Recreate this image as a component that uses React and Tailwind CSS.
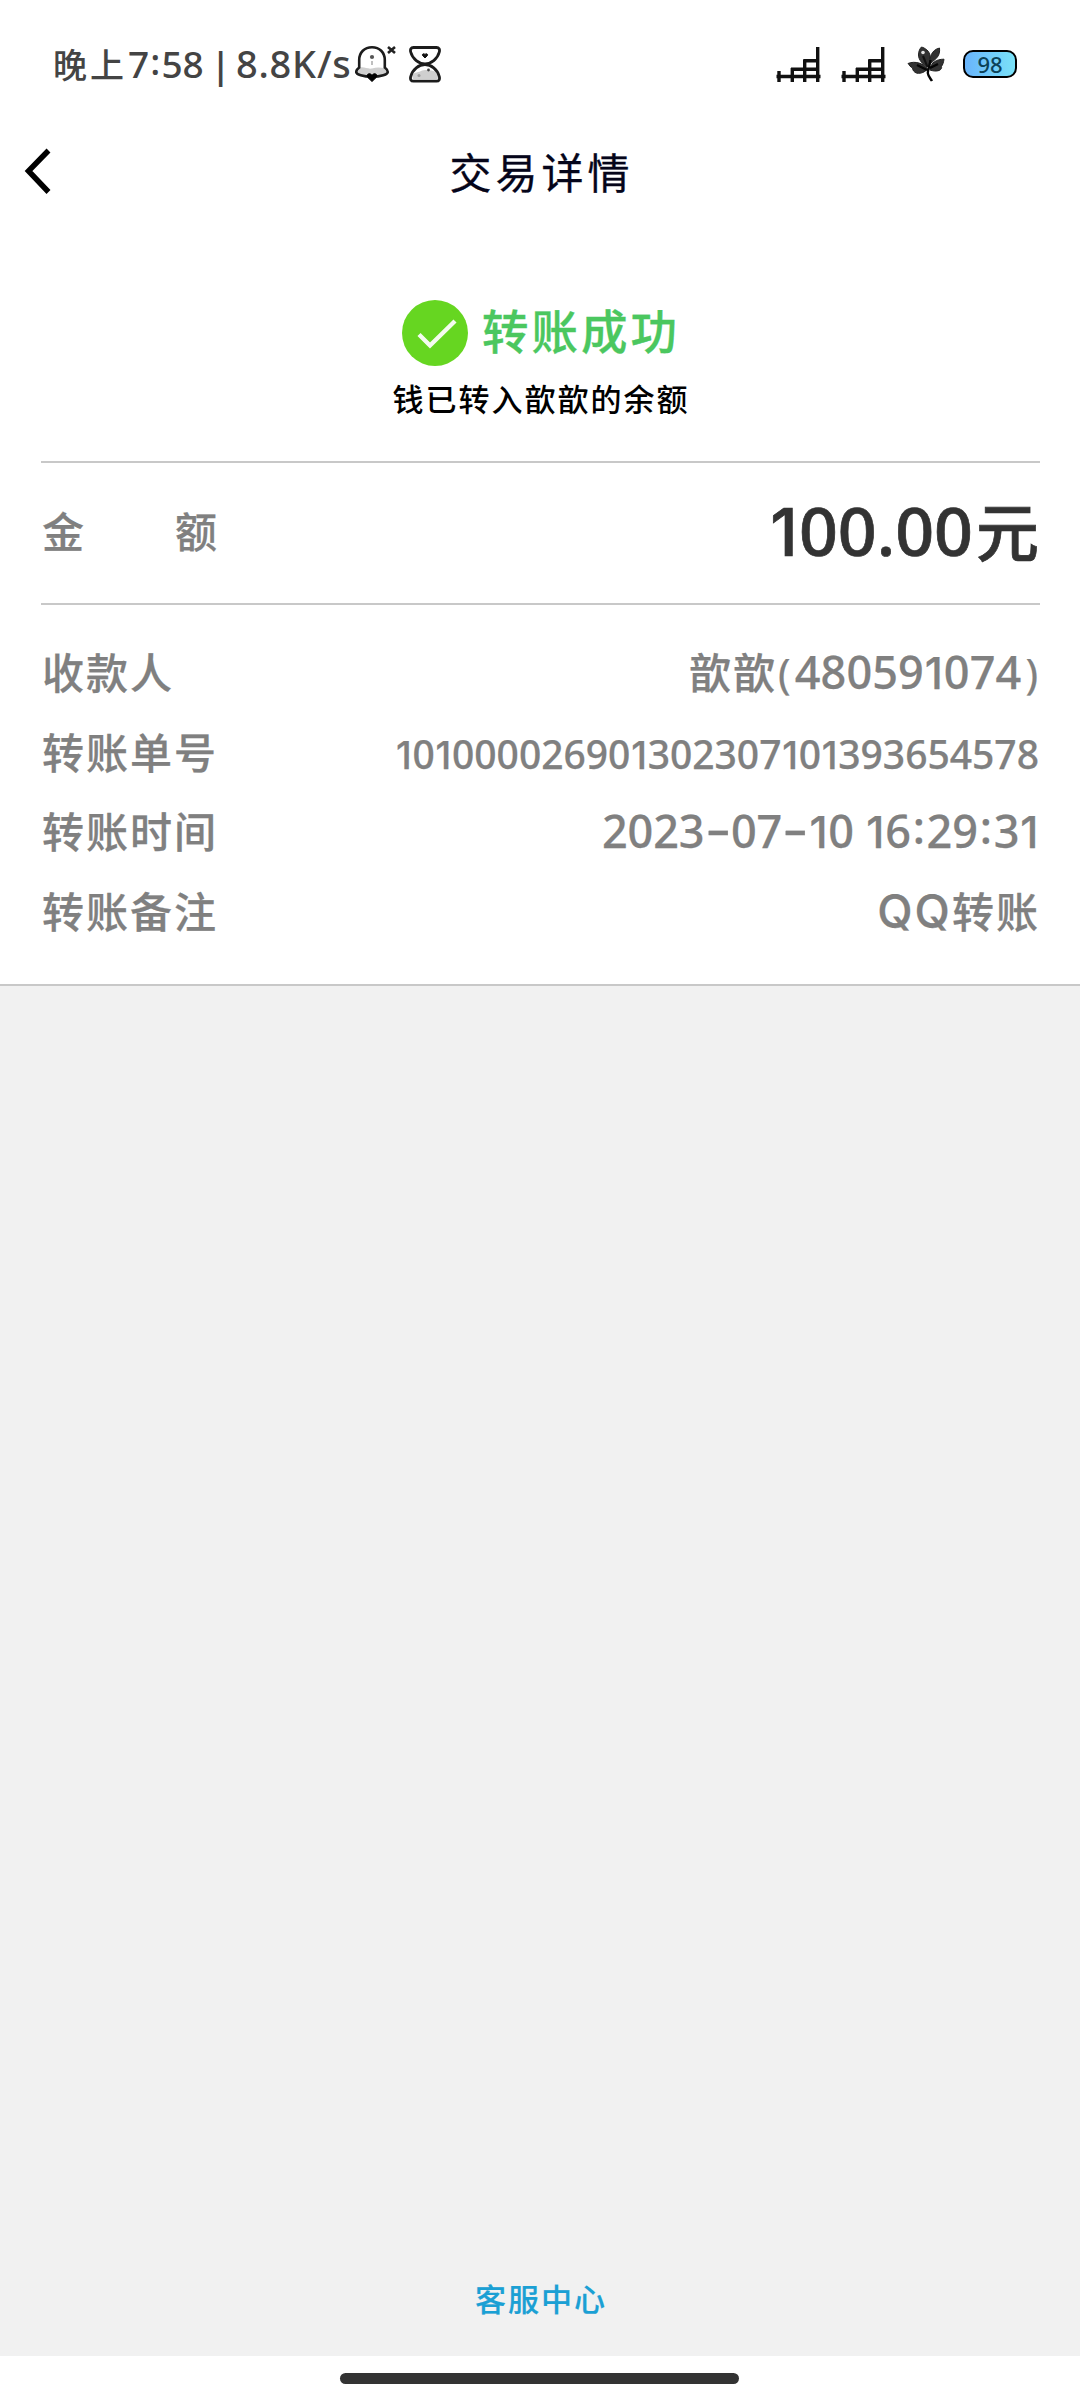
const details = [
  { label: '转账单号', value: '101000026901302307101393654578', small: true },
  { label: '转账时间', value: '2023-07-10 16:29:31' },
];

const glyphClass = {
  1: 'font-[Inter] text-[0.97em] px-[0.02em]',
  '-': 'mx-[6px] inline-block -translate-y-[3px] scale-x-[1.7]',
  ':': 'mx-[0.04em] inline-block -translate-y-[0.08em]',
};

// Latin digits with a narrow "1" and raised separators
function Digits({ text, className = '' }) {
  return (
    <span className={`font-['Noto_Sans','Noto_Sans_CJK_SC',sans-serif] whitespace-pre ${className}`}>
      {text.split(/([1:-])/).map((part, i) =>
        glyphClass[part] ? (
          <span key={i} className={glyphClass[part]}>
            {part}
          </span>
        ) : (
          part
        ),
      )}
    </span>
  );
}

function BellIcon() {
  return (
    <svg width="41" height="38" viewBox="0 0 41 38" fill="none">
      <path d="M3 23.5C8 20.5 12 24.5 17 23.5C22 22 26 22.5 30 23.5C33 26 33.5 28 31 29.5C26 32 9 32.5 3 30C0.5 28 1.5 25 3 23.5Z" fill="#cfcfcf" />
      <path
        d="M4.2 22.5V15C4.2 7.5 9.5 2.2 17 2.2C24.5 2.2 29.8 7.5 29.8 15V22.5C31.5 23.8 32.8 25 32.8 27C32.8 29.5 26 31.8 17 31.8C8 31.8 1.2 29.5 1.2 27C1.2 25 2.5 23.8 4.2 22.5Z"
        stroke="#1c1c1c"
        strokeWidth="2.6"
      />
      <circle cx="17" cy="12" r="2.1" fill="#555" />
      <path d="M17 16V20" stroke="#aaa" strokeWidth="1.5" />
      <path d="M17 36.5L12.8 32.5C11.5 30.5 12.3 29 14 28.8C15.5 28.6 16.5 29.5 17 30.3C17.5 29.5 18.5 28.6 20 28.8C21.7 29 22.5 30.5 21.2 32.5Z" fill="#000" stroke="#000" />
      <path d="M33 2L40 8M40 2L33 8" stroke="#222" strokeWidth="2.6" />
    </svg>
  );
}

function HourglassIcon() {
  return (
    <svg width="32" height="37" viewBox="0 0 32 37" fill="none">
      <path d="M3 30C4 26 8 27 12 25C16 23 23 24 27 26C29 28 29.5 31 28.5 33H4Z" fill="#cfcfcf" />
      <path
        d="M4.5 1.5H27.5C30 1.5 31 3.2 30.3 6C28.5 13 22 18 16 18C10 18 3.5 13 1.7 6C1 3.2 2 1.5 4.5 1.5Z"
        stroke="#1c1c1c"
        strokeWidth="2.8"
      />
      <path
        d="M4.5 35.2H27.5C30 35.2 31 33.5 30.3 30.5C28.5 23.5 22 18.5 16 18.5C10 18.5 3.5 23.5 1.7 30.5C1 33.5 2 35.2 4.5 35.2Z"
        stroke="#1c1c1c"
        strokeWidth="2.8"
      />
      <path d="M16 12L13.5 9.5C12.9 8 14.8 7 16 8.5C17.2 7 19.1 8 18.5 9.5Z" fill="#111" stroke="#111" />
      <circle cx="10" cy="29.5" r="1.5" fill="#999" />
      <circle cx="19.5" cy="24" r="1.4" fill="#444" />
    </svg>
  );
}

function SignalIcon() {
  return (
    <svg width="45" height="37" viewBox="0 0 45 37" fill="none" stroke="#111" strokeWidth="3.4">
      <path d="M0.5 30.5H44.5" />
      <path d="M3 25V36M16.3 22V36M28.7 13.5V36M41.7 1V36" />
      <path d="M15 23.2H42M27.5 14.8H42" />
    </svg>
  );
}

function LeafIcon() {
  return (
    <svg width="38" height="37" viewBox="0 0 38 37" fill="none">
      <g fill="#333" stroke="#222" strokeWidth="1">
        <path d="M21 21C16 19 11.5 14 11.5 9C11.5 5 13 2.5 14.5 1C18 2 22.5 5 23 9.5C23.3 14 22.5 18 21 21Z" />
        <path d="M23 18C22.5 12 24 4 32.5 2C33 6 32 9.5 30 11.5C28 13.8 25.5 16 23 18Z" />
        <path d="M23.5 22C24 17 29 13.2 37 13.2C36.5 17 35.5 19 34.5 20.5C35 22 34 23.8 32 24.5C29 25.5 26 25 23 24Z" />
        <path d="M20.5 23C17 17.5 8 14.5 1 17.5C2.5 19 3 21 5.5 21.8C5.5 24 7 26.5 10 27.2C14 27.8 18 26 20.5 23Z" />
      </g>
      <path d="M23.5 14C23 19 21 23 20.8 27C21 30 23.5 32.5 25 35M10 19L20 24M31 18L23 22" stroke="#050505" strokeWidth="2.4" />
      <path d="M16 10L20.5 21" stroke="#111" strokeWidth="2" />
      <circle cx="16" cy="6.5" r="1.8" fill="#e5e5e5" />
    </svg>
  );
}

function StatusBar() {
  return (
    <div className="flex h-32 items-center pr-[63px] pl-[53px] font-medium text-[#444]">
      <div className="flex w-[299px] items-baseline pb-px leading-none whitespace-nowrap">
        <span className="text-[34px] tracking-[3px]">晚上</span>
        <Digits text="7:58" className="ml-px text-[37px] tracking-[-0.3px]" />
        <Digits text=" | " className="text-[36px] font-semibold tracking-[-2px]" />
        <Digits text="8.8K/s" className="text-[38px] tracking-[0.8px]" />
      </div>
      <div className="ml-[3px] flex items-center">
        <BellIcon />
        <div className="ml-[13px]">
          <HourglassIcon />
        </div>
      </div>
      <div className="ml-auto flex items-center">
        <SignalIcon />
        <div className="ml-5">
          <SignalIcon />
        </div>
        <div className="ml-[21px]">
          <LeafIcon />
        </div>
        <div className="ml-[18px] flex h-7 w-[54px] items-center justify-center rounded-[10px] border-2 border-black bg-linear-to-r from-[#69b4fb] to-[#7ae2f8]">
          <Digits text="98" className="text-[22px] leading-none text-[#0b4257]" />
        </div>
      </div>
    </div>
  );
}

function Row({ label, children }) {
  return (
    <div className="flex h-[79.7px] items-baseline justify-between leading-[80px]">
      <span className="text-[42px] tracking-[2px]">{label}</span>
      {children}
    </div>
  );
}

export default function App() {
  return (
    <div className="flex h-[2400px] w-[1080px] flex-col bg-white font-['Noto_Sans_CJK_SC',sans-serif]">
      <StatusBar />

      <header className="grid h-[86px] grid-cols-[80px_1fr_80px] items-center">
        <svg className="ml-[22px]" width="30" height="48" viewBox="0 0 30 48" fill="none" stroke="#000" strokeWidth="5.5">
          <path d="M26.500 3.500L6.500 24L26.500 45" />
        </svg>
        <h1 className="pl-[3px] text-center text-[42px] leading-none tracking-[4px] text-[#05051a] [-webkit-text-stroke:0.3px_#05051a]">
          交易详情
        </h1>
      </header>

      <section className="mt-[86px] flex flex-col items-center">
        <div className="flex h-[66px] items-center gap-[14px] pl-[2px]">
          <svg width="66" height="66" viewBox="0 0 66 66" fill="none">
            <circle cx="33" cy="33" r="33" fill="#66d621" />
            <path d="M17 34.5L28 45.5L53 21" stroke="#f4fcef" strokeWidth="4.4" />
          </svg>
          <span className="pb-2 text-[46.5px] leading-none font-medium tracking-[3px] text-[#4bc75f] [-webkit-text-stroke:0.3px_#4bc75f]">
            转账成功
          </span>
        </div>
        <p className="pl-[2px] text-[31px] leading-[63px] font-medium tracking-[2px] text-black">钱已转入歆歆的余额</p>
      </section>

      <section className="mt-8 mr-10 ml-[41px] flex h-[144px] items-center justify-between border-y-2 border-[#c8c8c8] leading-none font-medium">
        <div className="flex gap-[89px] pb-[7px] pl-px text-[42px] tracking-[2px] text-[#808080] [-webkit-text-stroke:0.25px_#808080]">
          <span>金</span>
          <span>额</span>
        </div>
        <div className="flex items-baseline pr-px pb-[5px] text-[#333] [-webkit-text-stroke:0.7px_#333]">
          <Digits text="100.00" className="mr-[3px] text-[68px]" />
          <span className="text-[63px]">元</span>
        </div>
      </section>

      <section className="h-[381px] border-b-2 border-[#c8c8c8] pt-[26px] pr-[41px] pl-[42px] font-medium text-[#808080] [-webkit-text-stroke:0.25px_#808080]">
        <Row label="收款人">
          <span className="flex items-baseline">
            <span className="text-[42px] tracking-[2px]">歆歆</span>
            <Digits text="(" className="mr-[4px] ml-px text-[42px] font-normal" />
            <Digits text="480591074" className="text-[45px] tracking-[0.1px]" />
            <Digits text=")" className="mr-px ml-[4px] text-[42px] font-normal" />
          </span>
        </Row>
        {details.map((d) => (
          <Row key={d.label} label={d.label}>
            {d.small ? <Digits text={d.value} className="text-[39px]" /> : <Digits text={d.value} className="text-[45px] tracking-[-0.1px]" />}
          </Row>
        ))}
        <Row label="转账备注">
          <span className="flex items-baseline">
            <span className="font-[Inter] text-[46px] tracking-[2px]">QQ</span>
            <span className="-mr-px text-[42px] tracking-[2px]">转账</span>
          </span>
        </Row>
      </section>

      <main className="flex flex-1 items-end justify-center bg-[#f1f1f1] pb-[27px]">
        <a className="pl-[2px] text-[31px] leading-[63px] font-medium tracking-[2px] text-[#1ba0d4] [-webkit-text-stroke:0.2px_#1ba0d4]">
          客服中心
        </a>
      </main>

      <footer className="flex h-11 items-center justify-center">
        <div className="mr-[2px] h-[11px] w-[399px] rounded-full bg-[#333]" />
      </footer>
    </div>
  );
}
